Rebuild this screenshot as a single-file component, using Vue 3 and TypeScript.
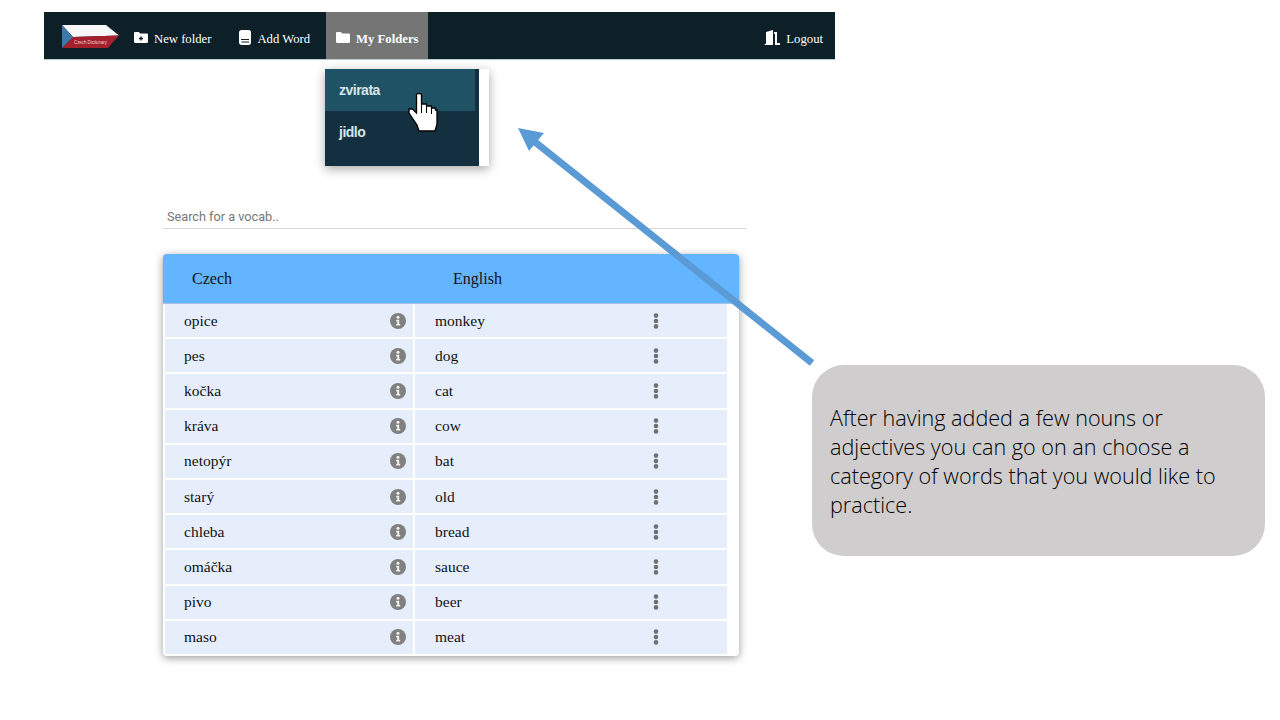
<script setup lang="ts">
const words: [string, string][] = [
  ['opice', 'monkey'],
  ['pes', 'dog'],
  ['kočka', 'cat'],
  ['kráva', 'cow'],
  ['netopýr', 'bat'],
  ['starý', 'old'],
  ['chleba', 'bread'],
  ['omáčka', 'sauce'],
  ['pivo', 'beer'],
  ['maso', 'meat'],
]
</script>

<template>
  <div class="slide">
    <div class="app">
      <nav class="nav">
        <svg class="logo" width="58" height="24" viewBox="0 0 58 24">
          <polygon points="1,0 45,0 58,10.500 12,12" fill="#f7f7f7" />
          <polygon points="12,12 58,10.500 47,23 1,23" fill="#a3202c" />
          <polygon points="1,0 12,12 1,23" fill="#3c78a8" />
          <text x="13" y="19" class="logo-text" textLength="33" lengthAdjust="spacingAndGlyphs">Czech Dictionary</text>
        </svg>
        <a class="item first">
          <svg width="14" height="11" viewBox="0 0 14 11">
            <path d="M0 1.200C0 .5.5 0 1.200 0h3.600l1.400 1.600h6.600c.7 0 1.200.5 1.200 1.200v7c0 .7-.5 1.200-1.200 1.200H1.200C.5 11 0 10.500 0 9.800Z" fill="#fff" />
            <path d="M6.300 4.500h1.400v1.300H9v1.400H7.700v1.300H6.300V7.200H5V5.800h1.300Z" fill="#0d1f27" />
          </svg>
          New folder
        </a>
        <a class="item second">
          <svg width="12" height="15" viewBox="0 0 12 15">
            <path d="M2.500 0h7.300C11 0 12 1 12 2.200v10.600c0 1.200-1 2.200-2.200 2.200H2.500C1.100 15 0 13.900 0 12.500v-10C0 1.100 1.100 0 2.500 0Z" fill="#fff" />
            <path d="M2 9h8v1H2ZM2.500 11.500h7.500v1H2.500Z" fill="#0d1f27" />
          </svg>
          Add Word
        </a>
        <a class="item active">
          <svg width="14" height="11" viewBox="0 0 14 11">
            <path d="M0 1.200C0 .5.5 0 1.200 0h3.600l1.400 1.600h6.600c.7 0 1.200.5 1.200 1.200v7c0 .7-.5 1.200-1.200 1.200H1.200C.5 11 0 10.500 0 9.800Z" fill="#fff" />
          </svg>
          My Folders
        </a>
        <a class="item logout">
          <svg width="16" height="15" viewBox="0 0 16 15">
            <path d="M0 15l2-1.500V2L9 0v15Z" fill="#fff" />
            <path d="M10 2h3v11h3v2h-5V4h-1Z" fill="#fff" />
          </svg>
          Logout
        </a>
      </nav>

      <div class="menu">
        <div class="menu-list">
          <div class="menu-item hover">zvirata</div>
          <div class="menu-item">jidlo</div>
        </div>
        <svg class="hand" width="30" height="40" viewBox="0 0 30 40">
          <path
            d="M8.500 2c0-1 .8-1.500 1.500-1.500h2c.8 0 1.500.5 1.500 1.500v9h5v2h5v2h4v2h1.500v14l-2 7H11l-2-6L1 20v-4h3.500l4 4Z"
            fill="#fff" stroke="#000" stroke-width="1.300" stroke-linejoin="miter"
          />
          <path d="M13.500 11v9M18.500 13v7M23.500 15v6" stroke="#000" stroke-width="1" fill="none" />
        </svg>
      </div>

      <div class="search">Search for a vocab..</div>

      <section class="table">
        <header class="thead">
          <span class="th-czech">Czech</span>
          <span class="th-english">English</span>
        </header>
        <div class="tbody">
          <div v-for="w in words" :key="w[0]" class="row">
            <div class="cell c1">
              <span>{{ w[0] }}</span>
              <svg class="info" width="16" height="16" viewBox="0 0 16 16">
                <circle cx="8" cy="8" r="8" fill="#808080" />
                <circle cx="8" cy="4.300" r="1.500" fill="#f2f2f2" />
                <path d="M6.200 6.800h3v4.200h1v1.600H6.200V11h1V8.400h-1Z" fill="#f2f2f2" />
              </svg>
            </div>
            <div class="cell c2">{{ w[1] }}</div>
            <div class="cell c3">
              <svg width="6" height="16" viewBox="0 0 6 16">
                <circle cx="3" cy="2.600" r="2.300" fill="#707070" />
                <circle cx="3" cy="8" r="2.300" fill="#707070" />
                <circle cx="3" cy="13.400" r="2.300" fill="#707070" />
              </svg>
            </div>
          </div>
        </div>
      </section>
    </div>

    <svg class="arrow" width="320" height="260" viewBox="0 0 320 260">
      <line x1="297" y1="243" x2="20" y2="22" stroke="#5b9bd5" stroke-width="7" />
      <polygon points="3,8 29,13 14,31" fill="#5b9bd5" />
    </svg>

    <aside class="callout">
      After having added a few nouns or adjectives you can go on an choose a category of words that you would like to practice.
    </aside>
  </div>
</template>

<style scoped>
.slide {
  position: relative;
  width: 1280px;
  height: 720px;
  overflow: hidden;
  background: #fff;
  padding-top: 12px;
  box-sizing: border-box;
  font-family: "Liberation Serif", serif;
}
.app {
  position: relative;
  width: 791px;
  margin-left: 44px;
}
.nav {
  display: flex;
  align-items: stretch;
  height: 47px;
  background: #0d1f27;
  color: #fff;
  font-size: 12.700px;
  box-shadow: 0 1px 0 #b9cbd0;
}
.logo {
  align-self: flex-start;
  margin: 13px 0 0 17px;
  flex: none;
}
.logo-text {
  font-family: "Liberation Sans", sans-serif;
  font-size: 4.500px;
  fill: #f0d0d0;
}
.item {
  display: flex;
  align-items: center;
  gap: 6px;
  white-space: nowrap;
  padding-top: 7px;
  box-sizing: border-box;
}
.item svg {
  flex: none;
  margin-top: -4px;
}
.first {
  margin-left: 15px;
}
.second {
  margin-left: 28px;
}
.active {
  margin-left: 16px;
  width: 102px;
  padding-left: 10px;
  background: #757575;
  font-weight: bold;
}
.logout {
  margin-left: auto;
  margin-right: 12px;
}
.menu {
  position: absolute;
  left: 281px;
  top: 57px;
  width: 164px;
  height: 97px;
  background: #fff;
  box-shadow: 0 3px 10px rgba(0, 0, 0, 0.35);
}
.menu-list {
  width: 154px;
  height: 100%;
  background: #143040;
}
.menu-item {
  box-sizing: border-box;
  height: 42px;
  width: 150px;
  padding: 13px 0 0 14px;
  font-family: "Liberation Sans", sans-serif;
  font-size: 14px;
  letter-spacing: -0.5px;
  font-weight: bold;
  color: #d7e6ea;
}
.menu-item.hover {
  background: #1f5264;
}
.hand {
  position: absolute;
  left: 83px;
  top: 24px;
}
.search {
  margin: 145px 0 0 119px;
  width: 583px;
  height: 25px;
  box-sizing: border-box;
  padding: 5px 0 0 4px;
  border-bottom: 1px solid #d8d8d8;
  font-family: Roboto, sans-serif;
  font-size: 12.700px;
  color: #777;
}
.table {
  margin: 25px 0 0 119px;
  width: 576px;
  height: 402px;
  background: #fff;
  border-radius: 4px;
  box-shadow: 0 2px 8px rgba(0, 0, 0, 0.4);
}
.thead {
  display: flex;
  align-items: center;
  height: 49px;
  background: #64b5ff;
  border-radius: 4px 4px 0 0;
  font-size: 16px;
  color: #111;
  box-shadow: 0 1px 1px rgba(60, 120, 190, 0.5);
}
.th-czech {
  margin-left: 29px;
}
.th-english {
  margin-left: 221px;
}
.tbody {
  display: flex;
  flex-direction: column;
  gap: 2px;
  padding: 1px 0 0 2px;
}
.row {
  display: grid;
  grid-template-columns: 248px 187px 123px;
  column-gap: 2px;
  height: 33.200px;
}
.cell {
  display: flex;
  align-items: center;
  background: #e6eefb;
  font-size: 15.500px;
  color: #111;
}
.c1 {
  justify-content: space-between;
  padding: 0 7px 0 19px;
}
.c2 {
  padding-left: 20px;
}
.c3 {
  padding-left: 49px;
  box-shadow: -2px 0 0 #e6eefb;
}
.arrow {
  position: absolute;
  left: 515px;
  top: 120px;
  pointer-events: none;
}
.callout {
  position: absolute;
  left: 812px;
  top: 365px;
  width: 453px;
  height: 191px;
  box-sizing: border-box;
  padding: 38px 20px 0 18px;
  background: #cfcdce;
  border-radius: 32px;
  font-family: "Open Sans", sans-serif;
  font-weight: 300;
  font-size: 21.600px;
  line-height: 29px;
  color: #000;
}
</style>
